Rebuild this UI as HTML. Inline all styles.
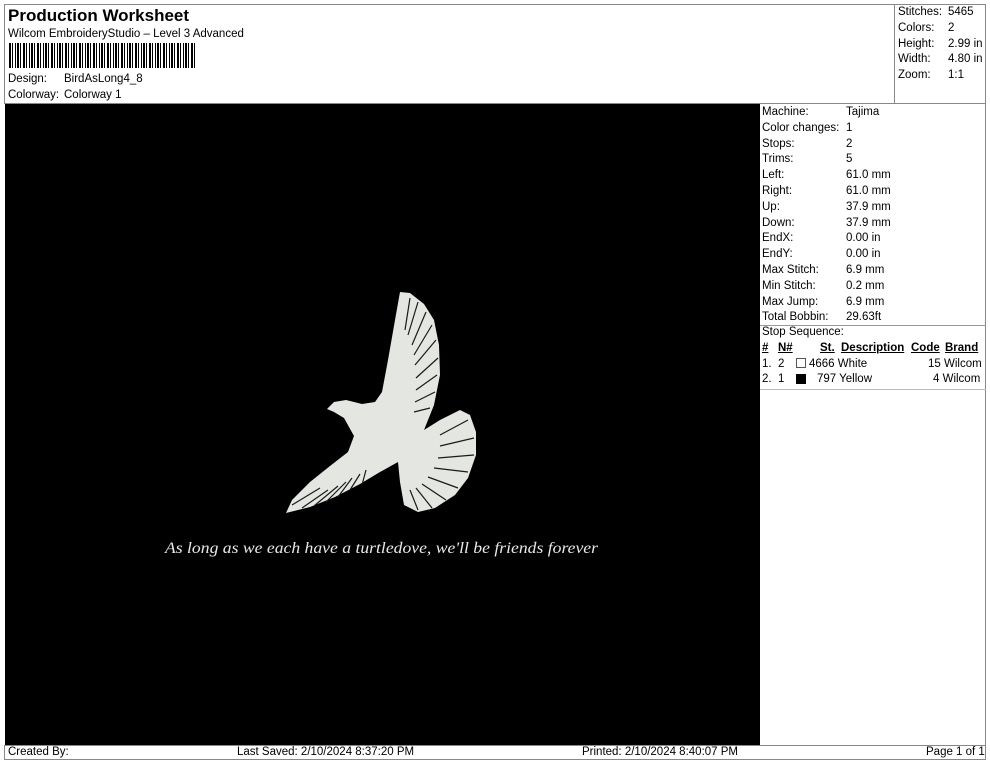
<!DOCTYPE html>
<html><head><meta charset="utf-8"><style>
*{margin:0;padding:0;box-sizing:border-box}
body{width:990px;height:762px;background:#fff;font-family:"Liberation Sans",sans-serif;color:#000;position:relative;overflow:hidden;font-size:11.5px}
.a{position:absolute;white-space:nowrap}
</style></head><body>
<div class="a" style="left:4px;top:4px;width:982px;height:100px;border:1px solid #888"></div>
<div class="a" style="left:894px;top:4px;width:1px;height:100px;background:#888"></div>
<div class="a" style="left:8px;top:6px;font-size:17px;font-weight:bold">Production Worksheet</div>
<div class="a" style="left:8px;top:28px">Wilcom EmbroideryStudio – Level 3 Advanced</div>
<div class="a" style="left:9px;top:43px;width:186px;height:25px;background:repeating-linear-gradient(90deg,#000 0 2px,#fff 2px 3px,#000 3px 4px,#fff 4px 6px,#000 6px 7px,#fff 7px 8px,#000 8px 10px,#fff 10px 11px,#000 11px 12px,#fff 12px 14px)"></div>
<div class="a" style="left:8px;top:73px">Design:</div><div class="a" style="left:64px;top:73px">BirdAsLong4_8</div>
<div class="a" style="left:8px;top:89px">Colorway:</div><div class="a" style="left:64px;top:89px">Colorway 1</div>
<div class="a" style="left:898px;top:5px;line-height:15.8px">Stitches:<br>Colors:<br>Height:<br>Width:<br>Zoom:</div>
<div class="a" style="left:948px;top:5px;line-height:15.8px">5465<br>2<br>2.99 in<br>4.80 in<br>1:1</div>

<div class="a" style="left:5px;top:104px;width:755px;height:641px;background:#000"></div>
<svg class="a" style="left:5px;top:104px" width="755" height="641" viewBox="5 104 755 641">
<path d="M327,409 L334,402 L346,400 L362,404 L375,402 L382,392 L388,360 L395,320 L400,292 L410,293 L424,304 L434,320 L439,345 L440,375 L434,405 L424,430 L440,420 L460,410 L470,415 L476,432 L476,455 L468,478 L455,495 L435,508 L418,512 L404,505 L400,482 L398,462 L380,472 L360,484 L335,497 L310,507 L286,513 L292,500 L310,482 L330,466 L348,452 L354,436 L344,418 L334,412 Z" fill="#e4e6e1"/>
<g stroke="#1a1a1a" stroke-width="1.2" fill="none">
<path d="M410,298L405,330M418,302L408,335M426,312L412,345M432,325L414,355M436,340L415,365M438,358L416,378M437,375L416,390M435,392L415,402M430,408L414,412"/>
<path d="M468,420L440,435M474,438L440,446M474,455L438,458M468,472L434,468M458,488L428,477M446,500L422,484M432,508L416,488M418,510L410,490"/>
<path d="M292,505L320,488M302,508L328,490M314,506L338,486M326,502L346,482M338,497L352,478M350,490L360,474M362,485L366,470"/>
</g>
<text x="165" y="553" fill="#e8e8e8" font-family="Liberation Serif,serif" font-style="italic" font-size="16" textLength="433" lengthAdjust="spacingAndGlyphs">As long as we each have a turtledove, we'll be friends forever</text>
</svg>

<div class="a" style="left:760px;top:104px;width:226px;height:641px;border-right:1px solid #888"></div>
<div class="a" style="left:762px;top:105px;line-height:15.8px">Machine:<br>Color changes:<br>Stops:<br>Trims:<br>Left:<br>Right:<br>Up:<br>Down:<br>EndX:<br>EndY:<br>Max Stitch:<br>Min Stitch:<br>Max Jump:<br>Total Bobbin:</div>
<div class="a" style="left:846px;top:105px;line-height:15.8px">Tajima<br>1<br>2<br>5<br>61.0 mm<br>61.0 mm<br>37.9 mm<br>37.9 mm<br>0.00 in<br>0.00 in<br>6.9 mm<br>0.2 mm<br>6.9 mm<br>29.63ft</div>
<div class="a" style="left:760px;top:325px;width:226px;height:1px;background:#999"></div>
<div class="a" style="left:762px;top:326px">Stop Sequence:</div>
<div class="a" style="left:762px;top:342px;font-weight:bold;text-decoration:underline">#</div>
<div class="a" style="left:778px;top:342px;font-weight:bold;text-decoration:underline">N#</div>
<div class="a" style="left:820px;top:342px;font-weight:bold;text-decoration:underline">St.</div>
<div class="a" style="left:841px;top:342px;font-weight:bold;text-decoration:underline">Description</div>
<div class="a" style="left:911px;top:342px;font-weight:bold;text-decoration:underline">Code</div>
<div class="a" style="left:945px;top:342px;font-weight:bold;text-decoration:underline">Brand</div>
<div class="a" style="left:762px;top:358px">1.&nbsp; 2</div>
<div class="a" style="left:796px;top:358px;width:10px;height:10px;border:1px solid #555"></div>
<div class="a" style="left:809px;top:358px">4666 White</div>
<div class="a" style="left:928px;top:358px">15 Wilcom</div>
<div class="a" style="left:762px;top:373px">2.&nbsp; 1</div>
<div class="a" style="left:796px;top:374px;width:10px;height:10px;background:#000"></div>
<div class="a" style="left:817px;top:373px">797 Yellow</div>
<div class="a" style="left:933px;top:373px">4 Wilcom</div>
<div class="a" style="left:760px;top:389px;width:226px;height:1px;background:#bbb"></div>

<div class="a" style="left:4px;top:745px;width:982px;height:15px;border:1px solid #888"></div>
<div class="a" style="left:8px;top:746px">Created By:</div>
<div class="a" style="left:237px;top:746px">Last Saved: 2/10/2024 8:37:20 PM</div>
<div class="a" style="left:582px;top:746px">Printed: 2/10/2024 8:40:07 PM</div>
<div class="a" style="left:926px;top:746px">Page 1 of 1</div>
</body></html>
